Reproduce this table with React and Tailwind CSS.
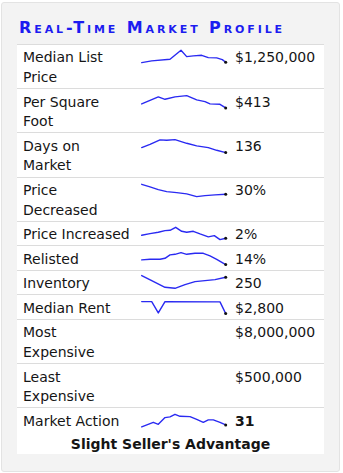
import React from 'react';

const rows = [
  { label: ['Median List', 'Price'], value: '$1,250,000',
    pts: [[0.2,12.5],[10.2,10.8],[28.5,9.2],[39.5,0.2],[45.2,6.5],[51.8,5.8],[60.2,5.2],[66.8,7.5],[75.2,7.8],[80.8,9.5],[84.2,12.2]] },
  { label: ['Per Square', 'Foot'], value: '$413',
    pts: [[0.2,8.8],[16.8,1.8],[23.5,4.2],[33.5,1.8],[45.2,0.5],[55.2,4.8],[63.5,6.5],[68.5,8.8],[78.5,9.2],[84.2,12.8]] },
  { label: ['Days on', 'Market'], value: '136',
    pts: [[0.2,8.5],[8.5,5.2],[18.5,0.8],[25.2,1.2],[33.5,0.5],[45.2,4.2],[55.2,6.8],[66.8,8.5],[75.2,11.2],[84.2,13.5]] },
  { label: ['Price', 'Decreased'], value: '30%',
    pts: [[0.2,1.2],[8.5,3.8],[16.8,6.5],[25.2,8.5],[35.2,9.5],[45.2,10.8],[55.2,13.5],[63.5,12.5],[73.5,11.8],[84.2,11.2]] },
  { label: ['Price Increased'], value: '2%',
    pts: [[0.2,8.2],[8.5,6.5],[16.8,5.2],[23.5,3.5],[28.5,3.2],[34.2,0.2],[40.2,4.2],[45.2,5.2],[51.8,4.2],[58.5,6.8],[66.8,9.8],[72.8,8.5],[78.5,12.5],[84.2,11.2]] },
  { label: ['Relisted'], value: '14%',
    pts: [[0.2,7.8],[8.5,7.2],[18.5,7.2],[23.5,6.2],[28.5,2.8],[33.5,2.2],[39.5,0.5],[45.2,2.2],[53.5,1.2],[61.8,1.2],[68.5,3.8],[75.2,7.2],[84.2,12.5]] },
  { label: ['Inventory'], value: '250',
    pts: [[0.2,-0.5],[10.2,4.5],[23.5,11.2],[33.5,12.2],[43.5,8.5],[53.5,5.5],[63.5,4.5],[73.5,3.5],[84.2,1.2]] },
  { label: ['Median Rent'], value: '$2,800',
    pts: [[0.2,0.5],[10.2,0.5],[16.8,11.8],[23.5,0.5],[78.5,0.8],[84.2,12.5]] },
  { label: ['Most', 'Expensive'], value: '$8,000,000' },
  { label: ['Least', 'Expensive'], value: '$500,000' },
];

const action = [[0.2,12.8],[11.8,8.2],[16.8,10.2],[23.5,3.5],[28.5,2.8],[33.5,0.2],[38.5,2.2],[48.5,2.5],[55.2,5.2],[61.8,8.2],[66.8,5.8],[71.8,5.8],[78.5,8.2],[84.2,10.8]];

function Spark({ pts }) {
  if (!pts) return null;
  const mapped = pts.map(([x, y]) => [x + 1.5, y + 2.1]);
  const last = mapped[mapped.length - 1];
  return (
    <svg width="88" height="18" className="block ml-[5px]">
      <polyline points={mapped.map(p => p.join(',')).join(' ')} fill="none" stroke="#2a2af2" strokeWidth="1.4" strokeLinejoin="round" strokeLinecap="round" />
      <circle cx={last[0]} cy={last[1]} r="1.5" fill="#111" />
    </svg>
  );
}

function Row({ label, value, pts, bold }) {
  return (
    <div className="grid grid-cols-[118px_96px_1fr] border-t border-[#dcdcdc] pt-[3.4px] pb-[0.6px] leading-[19.6px]">
      <div className="pl-[6px]">
        {label.map((l, i) => <div key={i} className="whitespace-nowrap">{l}</div>)}
      </div>
      <div><Spark pts={pts} /></div>
      <div className={`pl-[4px] whitespace-nowrap ${bold ? 'font-bold' : ''}`}>{value}</div>
    </div>
  );
}

export default function App() {
  return (
    <div className="w-[343px] h-[473px] bg-white overflow-hidden" style={{ fontFamily: '"DejaVu Sans", sans-serif' }}>
      <div className="ml-[1px] mt-[2px] w-[339px] border border-[#e3e3e3] rounded-[3px] bg-[#f3f3f3] px-[15px] pb-[17px]">
        <div className="pt-[15px] pb-[6px] pl-[2px] leading-[20px] text-[16px] font-bold text-[#1c1cf0] tracking-[2.9px] whitespace-nowrap" style={{ fontVariant: 'small-caps' }}>
          Real-Time Market Profile
        </div>
        <div className="bg-white text-[14px] text-[#151515]">
          {rows.map((r, i) => <Row key={i} {...r} />)}
          <div className="border-t border-[#dcdcdc] pt-[3.4px] leading-[19.6px]">
            <div className="grid grid-cols-[118px_96px_1fr]">
              <div className="pl-[6px] whitespace-nowrap">Market Action</div>
              <div><Spark pts={action} /></div>
              <div className="pl-[4px] font-bold">31</div>
            </div>
            <div className="mt-[4px] leading-[19px] text-center font-bold">Slight Seller's Advantage</div>
          </div>
        </div>
      </div>
    </div>
  );
}
